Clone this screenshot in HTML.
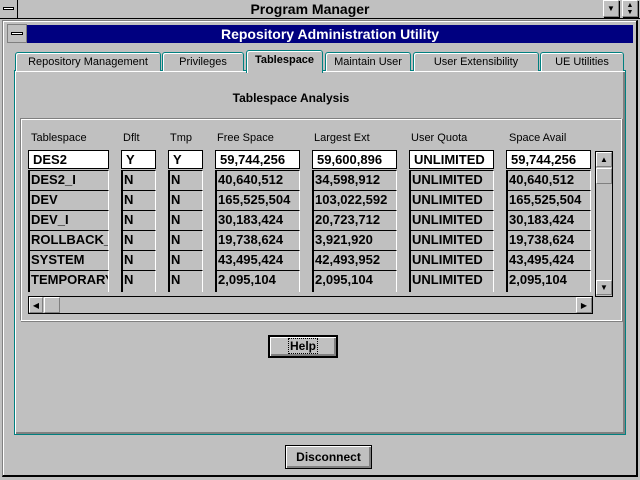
<!DOCTYPE html>
<html><head><meta charset="utf-8"><style>
*{margin:0;padding:0;box-sizing:border-box}
body{width:640px;height:480px;background:#c0c0c0;position:relative;overflow:hidden;font-family:"Liberation Sans",sans-serif;color:#000}
.a{position:absolute}
.pm{left:0;top:0;width:640px;height:19px;background:#c0c0c0;border-bottom:1px solid #000}
.pmt{left:18px;top:0;width:584px;height:18px;text-align:center;font-weight:bold;font-size:14px;line-height:18px}
.btn{background:#c0c0c0;border:1px solid;border-color:#fff #808080 #808080 #fff;box-shadow:1px 1px 0 #000}
.cell{position:absolute;height:20px;font-weight:bold;font-size:13px;line-height:18px;padding-left:1px;white-space:nowrap;overflow:hidden;border-top:1px solid #000;border-left:2px solid #000;border-right:1px solid #fff;background:#c0c0c0}
.w{background:#fff;border:1px solid #000;height:19px;padding-left:4px;line-height:17px}
.h{position:absolute;top:132px;font-size:11px}
.tab{position:absolute;top:52px;height:19px;border:1px solid #008080;border-bottom:none;border-radius:3px 3px 0 0;font-size:11px;text-align:center;line-height:18px;background:#c0c0c0;box-shadow:inset 1px 1px 0 #fff}
</style></head><body>
<div class="a pm"></div>
<div class="a" style="left:0;top:0;width:18px;height:18px;border-right:1px solid #000"><div class="a" style="left:3px;top:7px;width:11px;height:3px;background:#fff;border:1px solid #000"></div></div>
<div class="a pmt">Program Manager</div>
<div class="a btn" style="left:603px;top:0;width:16px;height:17px;font-size:8px;text-align:center;line-height:16px">▼</div>
<div class="a btn" style="left:622px;top:0;width:16px;height:17px;font-size:7px;text-align:center;line-height:7px;padding-top:1px">▲<br>▼</div>

<div class="a" style="left:2px;top:20px;width:636px;height:457px;border:1px solid #808080;border-right:2px solid #000;border-bottom:2px solid #000;box-shadow:inset 1px 1px 0 #fff"></div>
<div class="a" style="left:7px;top:24px;width:20px;height:19px;background:#c0c0c0;border:1px solid #808080"><div class="a" style="left:3px;top:7px;width:12px;height:3px;background:#fff;border:1px solid #000"></div></div>
<div class="a" style="left:27px;top:25px;width:606px;height:18px;background:#000080;color:#fff;font-weight:bold;font-size:14px;text-align:center;line-height:18px">Repository Administration Utility</div>

<div class="a" style="left:14px;top:70px;width:612px;height:365px;border:1px solid #008080;box-shadow:inset 1px 1px 0 #fff,inset -2px -2px 0 #808080"></div>
<div class="tab" style="left:15px;width:146px">Repository Management</div>
<div class="tab" style="left:162px;width:82px">Privileges</div>
<div class="tab" style="left:325px;width:86px">Maintain User</div>
<div class="tab" style="left:413px;width:126px">User Extensibility</div>
<div class="tab" style="left:540px;width:84px">UE Utilities</div>
<div class="tab" style="left:246px;top:50px;width:77px;height:23px;font-weight:bold;border-bottom:none;z-index:2">Tablespace</div>

<div class="a" style="left:0;top:91px;width:582px;text-align:center;font-weight:bold;font-size:12px">Tablespace Analysis</div>

<div class="a" style="left:20px;top:118px;width:602px;height:203px;border:1px solid #808080;border-right-color:#fff;border-bottom-color:#fff;box-shadow:inset 1px 1px 0 #fff,1px 1px 0 #808080"></div>

<div class="h" style="left:31px">Tablespace</div>
<div class="h" style="left:123px">Dflt</div>
<div class="h" style="left:170px">Tmp</div>
<div class="h" style="left:217px">Free Space</div>
<div class="h" style="left:314px">Largest Ext</div>
<div class="h" style="left:411px">User Quota</div>
<div class="h" style="left:509px">Space Avail</div>

<div id="g"></div>
<script>
var cols=[[28,81],[121,35],[168,35],[215,85],[312,85],[409,85],[506,85]];
var rows=[["DES2","Y","Y","59,744,256","59,600,896","UNLIMITED","59,744,256"],
["DES2_I","N","N","40,640,512","34,598,912","UNLIMITED","40,640,512"],
["DEV","N","N","165,525,504","103,022,592","UNLIMITED","165,525,504"],
["DEV_I","N","N","30,183,424","20,723,712","UNLIMITED","30,183,424"],
["ROLLBACK_DATA","N","N","19,738,624","3,921,920","UNLIMITED","19,738,624"],
["SYSTEM","N","N","43,495,424","42,493,952","UNLIMITED","43,495,424"],
["TEMPORARY","N","N","2,095,104","2,095,104","UNLIMITED","2,095,104"]];
var h="";
rows.forEach(function(r,i){cols.forEach(function(c,j){
var t=i==0?150:150+i*20;
h+='<div class="cell'+(i==0?' w':'')+'" style="left:'+c[0]+'px;top:'+t+'px;width:'+c[1]+'px'+(i==0?'':';height:'+(i==6?22:20)+'px')+'">'+r[j]+'</div>';});});
document.getElementById("g").innerHTML=h;
</script>

<div class="a" style="left:595px;top:151px;width:18px;height:146px;border:1px solid #000;background:#c0c0c0"></div>
<div class="a btn" style="left:596px;top:152px;width:16px;height:15px;font-size:8px;text-align:center;line-height:14px;box-shadow:none">▲</div>
<div class="a btn" style="left:596px;top:168px;width:16px;height:16px;box-shadow:none"></div>
<div class="a btn" style="left:596px;top:280px;width:16px;height:15px;font-size:8px;text-align:center;line-height:14px;box-shadow:none">▼</div>

<div class="a" style="left:28px;top:296px;width:565px;height:18px;border:1px solid #000;background:#c0c0c0"></div>
<div class="a btn" style="left:29px;top:297px;width:14px;height:16px;font-size:8px;text-align:center;line-height:15px;box-shadow:none">◀</div>
<div class="a btn" style="left:44px;top:297px;width:16px;height:16px;box-shadow:none"></div>
<div class="a btn" style="left:576px;top:297px;width:16px;height:16px;font-size:8px;text-align:center;line-height:15px;box-shadow:none">▶</div>

<div class="a" style="left:268px;top:335px;width:70px;height:23px;border:2px solid #000;background:#c0c0c0;box-shadow:inset 1px 1px 0 #fff,inset -2px -2px 0 #808080;text-align:center;font-weight:bold;font-size:12px;line-height:19px"><span style="outline:1px dotted #000;padding:0 1px">Help</span></div>
<div class="a" style="left:285px;top:445px;width:87px;height:24px;border:1px solid #000;background:#c0c0c0;box-shadow:inset 1px 1px 0 #fff,inset -2px -2px 0 #808080;text-align:center;font-weight:bold;font-size:12px;line-height:22px">Disconnect</div>
</body></html>
